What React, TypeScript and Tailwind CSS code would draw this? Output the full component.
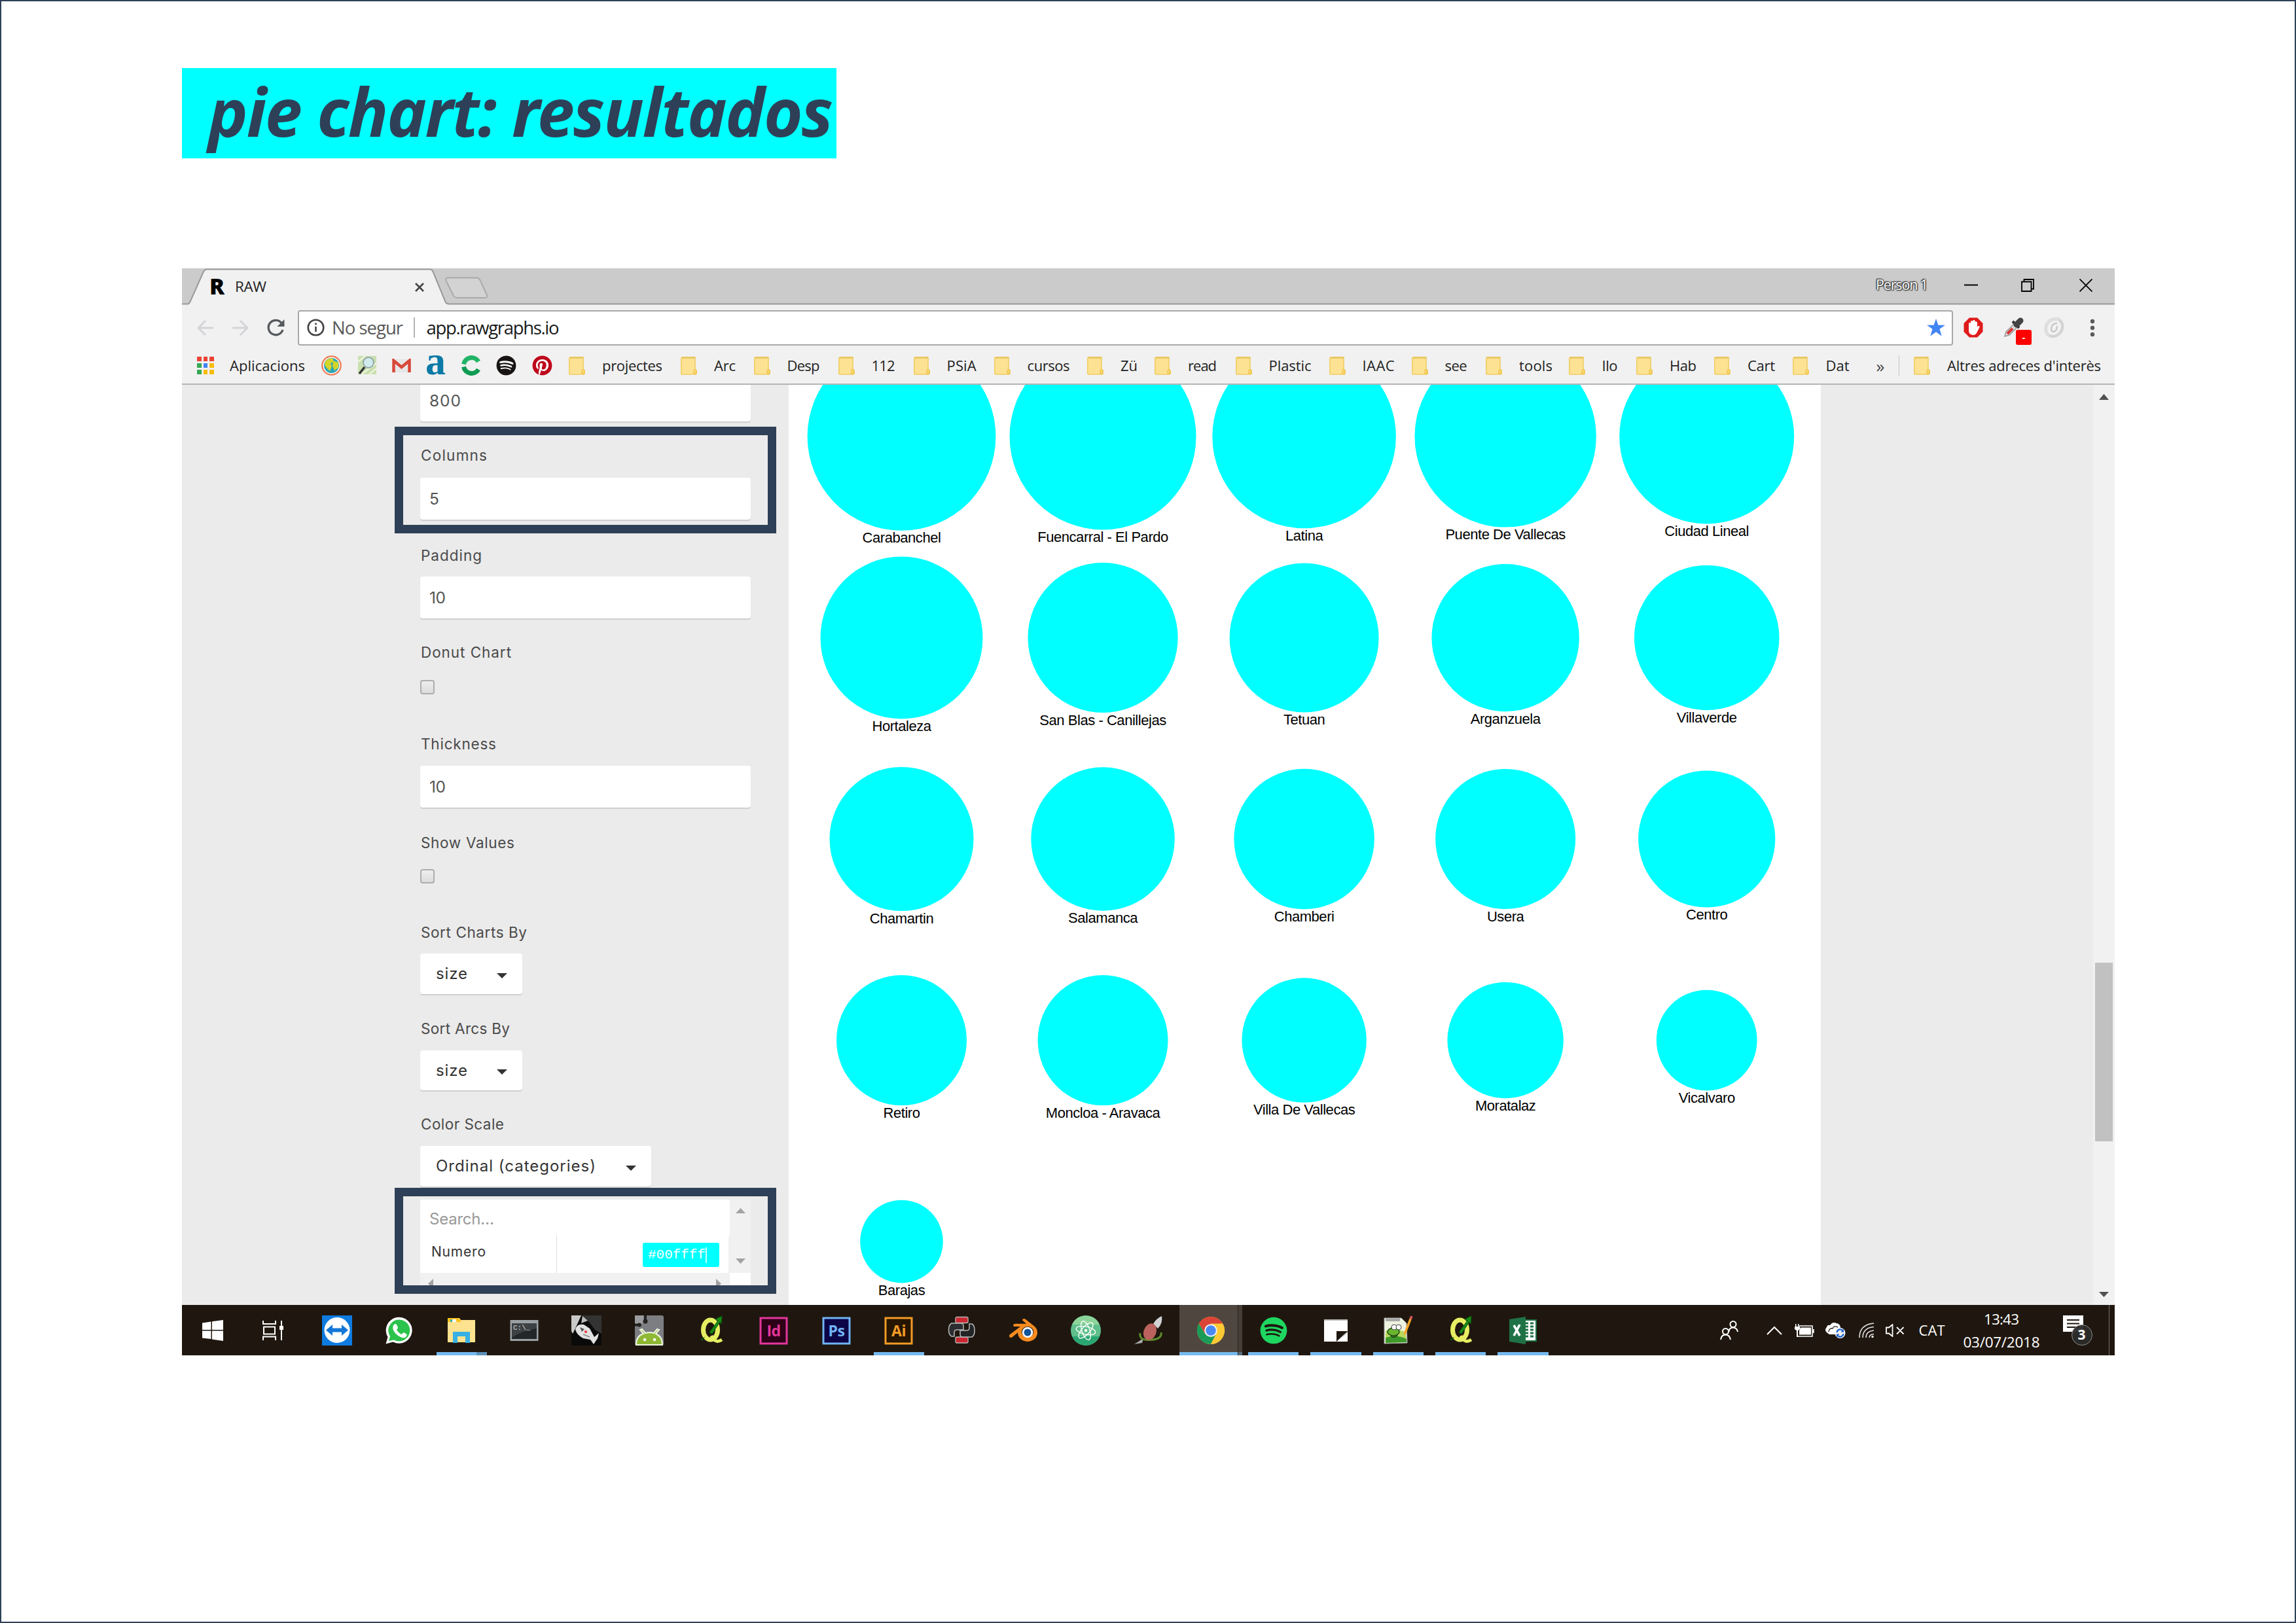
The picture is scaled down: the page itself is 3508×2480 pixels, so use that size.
import { useLayoutEffect, useRef, type ReactNode } from "react";
import { FaPinterest, FaSpotify } from "react-icons/fa";
import { SiBlender } from "react-icons/si";

const UI = "font-['Open_Sans','Noto_Sans',sans-serif]";
const FORM = "font-['Inter',sans-serif]";

/* A line of text whose letters are spaced to fill a given width. */
function Fit({ children, w, className = "" }: { children: string; w: number; className?: string }) {
  const ref = useRef<HTMLSpanElement>(null);
  useLayoutEffect(() => {
    const el = ref.current;
    if (!el) return;
    el.style.letterSpacing = "0px";
    const natural = el.getBoundingClientRect().width;
    el.style.letterSpacing = `${(w - natural) / Math.max(1, children.length - 1)}px`;
  }, [children, w]);
  return (
    <span className={`block shrink-0 whitespace-nowrap ${className}`} style={{ width: w }}>
      <span ref={ref} className="inline-block">{children}</span>
    </span>
  );
}

/* ---------- browser chrome ---------- */

function TabStrip() {
  return (
    <div className="relative flex h-[55px] shrink-0 items-center bg-[#cbcbcb]">
      <svg className="absolute left-0 top-0" width="2953" height="56" viewBox="0 0 2953 56" fill="none">
        <path d="M10 56L34 4Q35 1.500 38 1.500H379Q382 1.500 383.500 5L404 52Q405 54.500 408 56Z" fill="#f1f1f1" />
        <path d="M0 54.500H9Q11.500 54 12.500 51L33 5Q35 1.500 38 1.500H379Q382 1.500 383.500 5L402.500 51Q404 54.500 408 54.500H2953" stroke="#999" strokeWidth="2" />
        <path d="M406 14.500H450Q454 14.500 455.500 18L466 41Q467 45 463 45H420Q416 45 414.500 41L403.500 19Q402.500 14.500 406 14.500Z" fill="#d3d3d3" stroke="#aaa" strokeWidth="2" />
      </svg>
      <span className="relative ml-[42px] w-[39px] font-['Noto_Sans',sans-serif] text-[34px] font-black leading-[57px] text-black">R</span>
      <Fit w={48} className={`relative text-[22.500px] leading-[58px] text-[#222] ${UI}`}>RAW</Fit>
      <svg className="relative ml-[227px] mt-[2px]" width="14" height="14" viewBox="0 0 14 14" stroke="#444" strokeWidth="2.600"><path d="M1 1L13 13M13 1L1 13" /></svg>
      <div className="relative ml-auto flex h-full items-center pr-[34px] pb-[4px]">
        <Fit w={80} className={`text-[21.500px] text-white [text-shadow:0_0_2px_#333,0_0_2px_#333,0_0_3px_#333,1px_1px_1px_#444,-1px_-1px_1px_#444] ${UI}`}>Person 1</Fit>
        <svg className="ml-[55px]" width="21" height="20" viewBox="0 0 21 20"><path d="M0 9.500H21" stroke="#000" strokeWidth="2" /></svg>
        <svg className="ml-[66px]" width="20" height="20" viewBox="0 0 20 20" fill="none" stroke="#000" strokeWidth="1.800"><path d="M1 4.500H15.500V19H1ZM4.500 4V1H19V15.500H16" /></svg>
        <svg className="ml-[69px]" width="20" height="20" viewBox="0 0 20 20" stroke="#000" strokeWidth="1.800"><path d="M.5.5L19.500 19.500M19.500.5L.5 19.500" /></svg>
      </div>
    </div>
  );
}

function Toolbar() {
  return (
    <div className="flex h-[66px] shrink-0 items-center bg-[#f1f1f1] pt-[5px] pl-[23px]">
      <svg width="25" height="26" viewBox="0 0 25 26" fill="none" stroke="#d3d4d8" strokeWidth="3"><path d="M25 13H2.500M13 2L2 13L13 24" /></svg>
      <svg className="ml-[29px]" width="25" height="26" viewBox="0 0 25 26" fill="none" stroke="#d3d4d8" strokeWidth="3"><path d="M0 13H22.500M12 2L23 13L12 24" /></svg>
      <svg className="ml-[28px]" width="27" height="27" viewBox="0 0 27 27" fill="none"><path d="M22.500 7A11.200 11.200 0 1 0 24 17" stroke="#55585c" strokeWidth="3.300" /><path d="M26.500 1V12H15.500Z" fill="#55585c" /></svg>
      <div className="ml-[20px] flex h-[54px] w-[2529px] items-center rounded-[4px] border-2 border-[#a8a8a8] bg-white pl-[12px]">
        <svg width="27" height="27" viewBox="0 0 27 27" fill="none" stroke="#444"><circle cx="13.500" cy="13.500" r="11.800" strokeWidth="2.600" /><path d="M13.500 12V20M13.500 6.500V9.300" strokeWidth="2.600" /></svg>
        <Fit w={109} className={`ml-[11px] text-[27.500px] text-[#5a5a5a] ${UI}`}>No segur</Fit>
        <span className="ml-[16px] h-[31px] w-[1.500px] bg-[#b5b5b5]" />
        <Fit w={203} className={`ml-[18px] text-[27.500px] text-[#1a1a1a] ${UI}`}>app.rawgraphs.io</Fit>
        <svg className="ml-auto mr-[10px]" width="28" height="27" viewBox="0 0 28 27" fill="#4285f4"><path d="M14 0L17.400 9.700H28L19.500 15.800L22.700 26.500L14 20.200L5.300 26.500L8.500 15.800L0 9.700H10.600Z" /></svg>
      </div>
      <svg className="ml-[16px]" width="30" height="31" viewBox="0 0 30 31"><path d="M9 .5H21L29.500 9V22L21 30.500H9L.5 22V9Z" fill="#e01b1b" /><path d="M8 16V9Q9.500 7 11 9V6Q12.500 4 14 6V5Q16 3 17.800 5V7Q19.500 5.500 21 7.500V15L22 13Q25 12.500 24.500 15L20 24Q18 27 14.500 27Q8 26 8 20Z" fill="#fff" /></svg>
      <div className="relative ml-[31px] h-[40px] w-[43px]">
        <svg className="absolute left-0 top-[3px]" width="32" height="32" viewBox="0 0 32 32" fill="none"><path d="M2 30L4 23L17 10L22 15L9 28Z" fill="#ddd" stroke="#999" strokeWidth="1.500" /><path d="M6 26L14 18" stroke="#d33" strokeWidth="4" /><path d="M14 7L24 17" stroke="#333" strokeWidth="4" /><path d="M20 12L26 6" stroke="#444" strokeWidth="9" strokeLinecap="round" /></svg>
        <span className="absolute left-[19px] top-[23px] flex h-[23px] w-[24px] items-center justify-center rounded-[3px] bg-[#f00] text-[14px] font-bold text-white">-</span>
      </div>
      <svg className="ml-[19px]" width="31" height="31" viewBox="0 0 31 31" fill="none"><path d="M24 3Q10 0 4 11Q0 22 8 28" stroke="#dedede" strokeWidth="5" /><path d="M8 28Q20 32 27 20Q31 9 23 4" stroke="#d2d2d2" strokeWidth="4" /><path d="M20 9Q12 9 11 17Q11 21 14 22Q20 21 20 13" stroke="#c2c2c2" strokeWidth="2" /></svg>
      <svg className="ml-[39px]" width="8" height="28" viewBox="0 0 8 28" fill="#5a5a5a"><circle cx="4" cy="4" r="3.200" /><circle cx="4" cy="14" r="3.200" /><circle cx="4" cy="24" r="3.200" /></svg>
    </div>
  );
}

function Folder() {
  return (
    <svg className="shrink-0" width="25" height="28" viewBox="0 0 25 28"><path d="M2 1H22V19L24 21V25.500Q24 27 22 27H2Q.8 27 .8 25V3Q.8 1 2 1Z" fill="#fde293" stroke="#f0cd63" strokeWidth="1.600" /><path d="M2 1.500H22" stroke="#e6c45c" strokeWidth="2.400" /><path d="M20 26V20.500Q22 17.500 24 20.500V26Z" fill="#fbd76c" stroke="#e9bf45" strokeWidth="1" /></svg>
  );
}

const BOOKMARKS: [string, number, number][] = [
  ["projectes", 92, 870], ["Arc", 33, 1041], ["Desp", 50, 1152.500], ["112", 36, 1281.500], ["PSiA", 45, 1396.500],
  ["cursos", 65, 1519.500], ["Zü", 26, 1662], ["read", 44, 1765], ["Plastic", 65, 1888.500], ["IAAC", 49, 2031.500],
  ["see", 34, 2157.500], ["tools", 51, 2271], ["Ilo", 24, 2397.500], ["Hab", 41, 2501], ["Cart", 42, 2620], ["Dat", 36, 2739.500],
];

function Bookmarks() {
  const cells = ["#ea4335", "#ea4335", "#ea4335", "#34a853", "#4285f4", "#fbbc05", "#34a853", "#fbbc05", "#fbbc05"];
  return (
    <div className="flex h-[57px] shrink-0 items-center border-b-2 border-[#b4b4b4] bg-[#f1f1f1] pl-[23px]">
      <div className="grid grid-cols-3 gap-[3px]">
        {cells.map((c, i) => <span key={i} className="size-[6.700px]" style={{ background: c }} />)}
      </div>
      <Fit w={115} className={`ml-[24px] text-[22px] text-[#222] ${UI}`}>Aplicacions</Fit>
      <svg className="ml-[25px]" width="31" height="31" viewBox="0 0 31 31"><circle cx="15.500" cy="15.500" r="14.200" fill="#fff" stroke="#ee7d55" strokeWidth="2.300" /><circle cx="15.500" cy="15.500" r="11.500" fill="#2da5b9" /><path d="M6 9Q12 3 18 5L18 10L14 12L16 17L13 24Q7 19 5 14ZM18 8L26 11L26 19L20 23L17 16Z" fill="#d3d52a" /></svg>
      <svg className="ml-[24px]" width="30" height="31" viewBox="0 0 30 31"><path d="M1 1H29V29H1Z" fill="#c8dfaf" /><path d="M1 10L12 1M6 29L29 12M18 29L29 20" stroke="#edf3d8" strokeWidth="2.500" /><path d="M11 18L3 28" stroke="#333" strokeWidth="3.500" /><circle cx="17" cy="11" r="8" fill="#cfe9ec" stroke="#93a8a8" strokeWidth="2" /></svg>
      <svg className="ml-[23px]" width="29" height="22" viewBox="0 0 29 22"><path d="M1 1H28V21H1Z" fill="#e6e6e6" /><path d="M2.500 21V3L14.500 13L26.500 3V21" fill="none" stroke="#d9473a" strokeWidth="4.500" /></svg>
      <span className="relative -top-[8px] ml-[22px] w-[34px] font-['Liberation_Serif',serif] text-[62px] font-bold leading-[50px] text-[#0c7aa6]">a</span>
      <svg className="ml-[21px] shrink-0" width="31" height="31" viewBox="0 0 31 31" fill="none"><path d="M26 9.500A12.200 12.200 0 0 0 3.500 13.500" stroke="#22b466" strokeWidth="7" /><path d="M3.500 17.500A12.200 12.200 0 0 0 26 21.500" stroke="#0e9c52" strokeWidth="7" /></svg>
      <FaSpotify className="ml-[22px] shrink-0 rounded-full bg-white" size={31} color="#191414" />
      <FaPinterest className="ml-[24px] shrink-0 rounded-full bg-white" size={31} color="#bd081c" />
      <div className="ml-[25px] flex items-center">
        {BOOKMARKS.map(([t, w, x], i) => {
          const next = i + 1 < BOOKMARKS.length ? BOOKMARKS[i + 1][2] : x + 128;
          return (
            <div key={t} className="flex shrink-0 items-center gap-[26px]" style={{ width: next - x }}>
              <Folder />
              <Fit w={w} className={`text-[22px] text-[#222] ${UI}`}>{t}</Fit>
            </div>
          );
        })}
      </div>
      <span className={`w-[15px] text-[26px] leading-[30px] text-[#444] ${UI}`}>»</span>
      <span className="ml-[19px] h-[31px] w-[1.500px] bg-[#c4c4c4]" />
      <div className="ml-[22px] flex items-center gap-[26px]">
        <Folder />
        <Fit w={235} className={`text-[22px] text-[#222] ${UI}`}>Altres adreces d'interès</Fit>
      </div>
    </div>
  );
}

/* ---------- options column ---------- */

function Label({ children, w, className }: { children: string; w: number; className: string }) {
  return (
    <div className={`flex shrink-0 items-end ${className}`}>
      <Fit w={w} className={`ml-px text-[22.500px] leading-[40px] text-[#4a4a4a] ${FORM}`}>{children}</Fit>
    </div>
  );
}

function Input({ children, w }: { children: string; w: number }) {
  return (
    <div className="flex h-[64px] w-[505px] shrink-0 items-center rounded-[4px] bg-white pl-[14px] shadow-[0_2px_1px_#cfcfcf]">
      <Fit w={w} className={`text-[24.500px] text-[#555] ${FORM}`}>{children}</Fit>
    </div>
  );
}

function Checkbox() {
  return <div className="h-[22px] w-[22px] shrink-0 rounded-[4px] border-2 border-[#adadad] bg-gradient-to-b from-[#eee] to-[#dcdcdc]" />;
}

function Select({ children, w, className }: { children: string; w: number; className: string }) {
  return (
    <div className={`flex shrink-0 items-center justify-between rounded-[4px] bg-white pl-[24px] pr-[23px] shadow-[0_2px_1px_#cfcfcf] ${className}`}>
      <Fit w={w} className={`text-[24px] text-[#333] ${FORM}`}>{children}</Fit>
      <svg className="mt-[5px]" width="16" height="8" viewBox="0 0 16 8" fill="#333"><path d="M0 0H16L8 8Z" /></svg>
    </div>
  );
}

function Options() {
  return (
    <div className="-mt-[8px] flex w-[927px] shrink-0 flex-col pl-[364px]">
      <Input w={48}>800</Input>
      <Label w={101} className="h-[86px] pb-[14px]">Columns</Label>
      <Input w={14}>5</Input>
      <Label w={93} className="h-[87px] pb-[12px]">Padding</Label>
      <Input w={25}>10</Input>
      <Label w={138} className="h-[94px] pb-[22px]">Donut Chart</Label>
      <Checkbox />
      <Label w={115} className="h-[109px] pb-[13px]">Thickness</Label>
      <Input w={25}>10</Input>
      <Label w={143} className="h-[94px] pb-[20px]">Show Values</Label>
      <Checkbox />
      <Label w={162} className="h-[107px] pb-[12px]">Sort Charts By</Label>
      <Select w={48} className="h-[62px] w-[156px]">size</Select>
      <Label w={136} className="h-[86px] pb-[13px]">Sort Arcs By</Label>
      <Select w={48} className="h-[61px] w-[156px]">size</Select>
      <Label w={127} className="h-[85px] pb-[13px]">Color Scale</Label>
      <Select w={244} className="h-[62px] w-[353px]">Ordinal (categories)</Select>
      <div className="mt-[20px] flex h-[132px] w-[505px] shrink-0 overflow-hidden bg-[#f1f1f1]">
        <div className="flex w-[473px] flex-col">
          <div className="flex h-[55px] shrink-0 items-center rounded-t-[4px] bg-white pl-[14px] pt-[4px]">
            <Fit w={99} className={`text-[24px] text-[#999] ${FORM}`}>Search…</Fit>
          </div>
          <div className="mr-[2px] flex h-[57px] shrink-0 bg-white">
            <div className="flex w-[209px] items-center border-r border-[#ddd] pl-[17px] pb-[7px]">
              <Fit w={83} className={`text-[21px] text-[#333] ${FORM}`}>Numero</Fit>
            </div>
            <div className="flex flex-1 justify-end pt-[11px] pr-[14px]">
              <div className="flex h-[37px] w-[117px] items-center rounded-[3px] bg-[#0ff] pl-[8px]">
                <Fit w={88} className="font-['Liberation_Mono',monospace] text-[21px] leading-[36px] text-white">#00ffff</Fit>
                <span className="h-[24px] w-[1.500px] bg-[#cff]" />
              </div>
            </div>
          </div>
          <div className="flex h-[30px] shrink-0 justify-between pt-[9px] pl-[12px] pr-[13px]">
            <svg width="8" height="15" viewBox="0 0 8 15" fill="#a3a3a3"><path d="M8 0V15L0 7.500Z" /></svg>
            <svg width="8" height="15" viewBox="0 0 8 15" fill="#a3a3a3"><path d="M0 0V15L8 7.500Z" /></svg>
          </div>
        </div>
        <div className="flex w-[32px] flex-col items-center">
          <svg className="mt-[13px] shrink-0" width="15" height="8" viewBox="0 0 15 8" fill="#a3a3a3"><path d="M0 8H15L7.500 0Z" /></svg>
          <svg className="mt-[69px] shrink-0" width="15" height="8" viewBox="0 0 15 8" fill="#a3a3a3"><path d="M0 0H15L7.500 8Z" /></svg>
          <div className="mt-[14px] h-[20px] w-full shrink-0 bg-white" />
        </div>
      </div>
    </div>
  );
}

/* ---------- chart ---------- */

const PIES: [string, number][] = [
  ["Carabanchel", 143.900], ["Fuencarral - El Pardo", 142.500], ["Latina", 140.300], ["Puente De Vallecas", 138.700], ["Ciudad Lineal", 133.500],
  ["Hortaleza", 124], ["San Blas - Canillejas", 114.600], ["Tetuan", 114], ["Arganzuela", 112.700], ["Villaverde", 110.800],
  ["Chamartin", 110], ["Salamanca", 109.700], ["Chamberi", 107.200], ["Usera", 107], ["Centro", 104.600],
  ["Retiro", 99.500], ["Moncloa - Aravaca", 99.500], ["Villa De Vallecas", 95.200], ["Moratalaz", 88.700], ["Vicalvaro", 76.900],
  ["Barajas", 63.300],
];

function Chart() {
  return (
    <svg className="block shrink-0 bg-white" width="1577" height="1406" viewBox="0 0 1577 1406">
      {PIES.map(([name, r], i) => {
        const cx = 172.500 + (i % 5) * 307.550;
        const cy = 78.900 + Math.floor(i / 5) * 307.550;
        return (
          <g key={name}>
            <circle cx={cx} cy={cy} r={r} fill="#00ffff" />
            <text x={cx} y={cy + r + 18.500} textAnchor="middle" className="fill-black font-['Liberation_Sans',Arial,sans-serif] text-[22px] tracking-[-0.450px]">{name}</text>
          </g>
        );
      })}
    </svg>
  );
}

/* ---------- taskbar ---------- */

const SIZE = { width: 46, height: 46, viewBox: "0 0 46 46", fill: "none" };

function Adobe({ t, fg, bg }: { t: string; fg: string; bg: string }) {
  return (
    <svg {...SIZE}>
      <rect x="3" y="4" width="40" height="39" fill={bg} stroke={fg} strokeWidth="3" />
      <text x="23" y="31.500" textAnchor="middle" fill={fg} className="font-['Open_Sans',sans-serif] text-[23px] font-bold tracking-[-0.500px]">{t}</text>
    </svg>
  );
}

function Qgis() {
  return (
    <svg {...SIZE}>
      <ellipse cx="21.500" cy="22" rx="11" ry="15" stroke="#e6ee62" strokeWidth="7" />
      <path d="M23 31Q29 44 39 37" stroke="#e6ee62" strokeWidth="5" />
      <path d="M20 26L33 8L29 6L39 1L38 13L36 10L24 28Z" fill="#168a16" stroke="#0a5d0a" />
      <path d="M6 36L13 33L9 39Z" fill="#0c4f16" />
    </svg>
  );
}

const APPS: { icon: ReactNode; bar?: boolean; active?: boolean; stacked?: boolean }[] = [
  { icon: <svg {...SIZE}><rect width="46" height="46" fill="#0e7be0" /><circle cx="23" cy="22.500" r="19.500" fill="#fff" /><path d="M6 22.500L16 14V19.500H30V14L40 22.500L30 31V25.500H16V31Z" fill="#1477d8" /></svg> },
  { icon: <svg {...SIZE}><path d="M2.500 43.500L5.500 33A20 20 0 1 1 13.500 40.500Z" fill="#fff" /><path d="M7 39L9 32A16.500 16.500 0 1 1 15 37.500Z" fill="#2cc34c" /><path d="M15 14Q17 12 19 14L21 18.500Q21 20 19 22Q22 27 26.500 29L29 26.500Q30 26 31 26.500L34.500 29Q35 31 33 33Q30 35.500 25 33Q16 29 13.500 21Q12.500 16.500 15 14Z" fill="#fff" /></svg> },
  { bar: true, stacked: true, icon: <svg {...SIZE}><path d="M2 4H20L22 7H44V41H2Z" fill="#fde28f" /><path d="M2 4H19L22 8V10H2Z" fill="#fcc21b" /><rect x="6" y="6" width="9" height="4" fill="#fff" /><rect x="6" y="6" width="3" height="4" fill="#35b0a0" /><path d="M10 42V25H36V42H29V32H17V42Z" fill="#37b0e4" /></svg> },
  { icon: <svg {...SIZE}><rect x="1.500" y="7" width="43" height="32" fill="#9aa0a4" /><rect x="4" y="12" width="38" height="24" fill="#24272a" /><path d="M4 12H42V20Q22 22 4 34Z" fill="#3d4144" /><text x="6" y="22" fill="#d4d4d4" className="font-['Liberation_Mono',monospace] text-[11px]">C:\_</text></svg> },
  { icon: <svg {...SIZE}><rect width="46" height="46" fill="#0a0a0a" /><path d="M14 0H46V28L36 22L27 10Z" fill="#333" /><path d="M0 0H15L11 9L5 22L2 28L0 24Z" fill="#c9c9c9" /><path d="M6 21Q9 12 19 14L28 20L35 33L42 27L40 35L34 44L29 37L18 35Q8 30 6 21Z" fill="#e2e2e2" /><path d="M17 1L25 8L15 12Z" fill="#bbb" /><path d="M13 18L20 21L16 25Z" fill="#555" /><path d="M18 29L28 33" stroke="#888" strokeWidth="1.500" /><circle cx="22" cy="25" r="2" fill="#e33" /></svg> },
  { icon: <svg {...SIZE}><rect x="1" y="0" width="44" height="46" rx="3" fill="#7d7e82" /><path d="M1 0H14V10L10 15H1Z" fill="#9b9c9f" /><path d="M17 0V9M1 14.500H8" stroke="#24211f" strokeWidth="4" /><circle cx="17" cy="9" r="3.500" fill="#24211f" /><circle cx="8" cy="14.500" r="3" fill="#24211f" /><path d="M3 45Q3 31 14 28L9 22L12 21L17 27Q24 25 30 27L35 21L38 22L33 28Q43 32 43 45Z" fill="#8fb935" stroke="#f1f5e4" strokeWidth="2" /><circle cx="16" cy="37" r="2.200" fill="#fff" /><circle cx="31" cy="37" r="2.200" fill="#fff" /></svg> },
  { icon: <Qgis /> },
  { icon: <Adobe t="Id" fg="#e3369a" bg="#2d0018" /> },
  { icon: <Adobe t="Ps" fg="#71b4f5" bg="#0b0548" /> },
  { bar: true, icon: <Adobe t="Ai" fg="#f29b26" bg="#261500" /> },
  { icon: <svg {...SIZE}><rect x="14" y="2.500" width="19" height="9" rx="2" fill="#cc2630" stroke="#b9b9b9" strokeWidth="1.300" /><rect x="14" y="33" width="19" height="9" rx="2" fill="#cc2630" stroke="#b9b9b9" strokeWidth="1.300" /><path d="M8 12H22Q26 12 26 16V22H16Q12 22 12 26V32H8Q3.500 30 3.500 22Q3.500 14 8 12Z" fill="#2b2d30" stroke="#b9b9b9" strokeWidth="1.500" /><path d="M39 33H25Q21 33 21 29V23H31Q35 23 35 19V13H39Q43 15 43 23Q43 31 39 33Z" fill="#222426" stroke="#b9b9b9" strokeWidth="1.500" /></svg> },
  { icon: <div className="relative flex size-[46px] items-center justify-center"><SiBlender size={43} color="#f68b1f" /><svg className="absolute left-0 top-0" {...SIZE}><circle cx="29" cy="26" r="8.300" fill="#fff" /><circle cx="29" cy="26" r="5.500" fill="#14549a" /></svg></div> },
  { icon: <svg {...SIZE}><circle cx="23" cy="23" r="23" fill="#5fbf8b" /><path d="M2 32A23 23 0 0 0 44 32Z" fill="#2ba673" /><path d="M2 14A23 23 0 0 1 44 14Z" fill="#8dd49a" /><g stroke="#fff" strokeWidth="1.400"><ellipse cx="23" cy="23" rx="15" ry="6" transform="rotate(12 23 23)" /><ellipse cx="23" cy="23" rx="15" ry="6" transform="rotate(72 23 23)" /><ellipse cx="23" cy="23" rx="15" ry="6" transform="rotate(132 23 23)" /></g><circle cx="23" cy="23" r="2.200" fill="#fff" /></svg> },
  { icon: <svg {...SIZE}><path d="M43 1Q45 12 37 20L30 13Q34 5 43 1Z" fill="#d2d2d4" /><path d="M1 44L15 35L13 42Z" fill="#a9a9ac" /><path d="M10 27Q8 38 24 37.500Q44 37 42 26" stroke="#5e8c2c" strokeWidth="3" /><ellipse cx="25" cy="25" rx="9.500" ry="13" transform="rotate(20 25 25)" fill="#bb625e" /></svg> },
  { bar: true, active: true, icon: <svg {...SIZE}><circle cx="23" cy="23" r="21" fill="#fcc934" /><path d="M4.800 12.500A21 21 0 0 1 41.200 12.500L23 14L14 28Z" fill="#db4437" /><path d="M4.800 12.500A21 21 0 0 0 23 44L32 28L23 31L14 28Z" fill="#1a9c58" /><path d="M41.200 12.500H23V14A9.500 9.500 0 0 1 31 28L23 44A21 21 0 0 0 41.200 12.500Z" fill="#fcc934" /><circle cx="23" cy="23" r="9.800" fill="#f1f1f1" /><circle cx="23" cy="23" r="7.800" fill="#4a89f3" /></svg> },
  { bar: true, icon: <span className="rounded-full bg-[#1e170f]"><FaSpotify size={42} color="#1ed760" /></span> },
  { bar: true, icon: <svg {...SIZE}><path d="M5 6H41V24L27 40H5Z" fill="#fff" /><path d="M5 6H41V8H5Z" fill="#bbb" /><path d="M24 24H41L24 40Z" fill="#1e170f" /><path d="M41 25V40H26Z" fill="#fff" /></svg> },
  { bar: true, icon: <svg {...SIZE}><path d="M2 4H28L36 12L37 42L2 43Z" fill="#eef3e0" stroke="#a5a5a5" /><path d="M4 24Q20 18 35 26L36 41L4 42Z" fill="#b9d95e" /><path d="M4 34Q20 28 36 36V41L4 42Z" fill="#3f9a2a" /><path d="M4 4.500H26V9H4Z" fill="#aaa" /><ellipse cx="16" cy="25" rx="9" ry="6" fill="#69b52e" stroke="#234d16" strokeWidth="1.500" /><circle cx="17" cy="18" r="4" fill="#fff" stroke="#444" /><circle cx="24" cy="18" r="4" fill="#fff" stroke="#444" /><path d="M12 31Q17 36 22 30" stroke="#234d16" strokeWidth="2" /><path d="M43 3L33 29" stroke="#f2a52a" strokeWidth="3.500" /><path d="M44 1L42 6" stroke="#c8525a" strokeWidth="3.500" /></svg> },
  { bar: true, icon: <Qgis /> },
  { bar: true, icon: <svg {...SIZE}><rect x="24" y="7" width="19" height="32" fill="#fff" stroke="#1f7246" strokeWidth="2" /><path d="M26 12H31M26 17H31M26 22H31M26 27H31M26 32H31M34 12H39M34 17H39M34 22H39M34 27H39M34 32H39" stroke="#1f7246" strokeWidth="3" /><path d="M2 6L27 2V44L2 40Z" fill="#1f7246" /><path d="M9 15L18 31M18 14L9 31" stroke="#fff" strokeWidth="3.600" /></svg> },
];

function Taskbar() {
  return (
    <div className="flex h-[77px] shrink-0 bg-[#1f170f]">
      <div className="flex w-[93px] items-center justify-center">
        <svg width="32" height="32" viewBox="0 0 32 32" fill="#fff"><path d="M0 4.500L13.500 2.500V15H0ZM15 2.300L32 0V15H15ZM0 16.500H13.500V29L0 27.500ZM15 16.500H32V32L15 29.500Z" /></svg>
      </div>
      <div className="flex w-[96px] items-center pl-[30px]">
        <svg width="32" height="30" viewBox="0 0 32 30" fill="none" stroke="#fff" strokeWidth="2"><path d="M1 0V5H20V0M1 30V24.500H20V30M2 9.500H19V20.500H2ZM29 0V30" /><rect x="27" y="9" width="4" height="4" fill="#fff" /></svg>
      </div>
      {APPS.map((a, i) => (
        <div key={i} className={`relative flex w-[95.400px] shrink-0 items-center justify-center ${a.active ? "bg-[#4f463f]" : ""}`}>
          {a.icon}
          {a.bar && <span className={`absolute bottom-0 h-[5px] bg-[#76b9ed] ${a.active ? "inset-x-0" : "inset-x-[9px]"}`} />}
          {a.stacked && <span className="absolute bottom-0 right-[9px] h-[5px] w-[16px] bg-[#5b8fb8]" />}
          {a.active && <span className="absolute right-0 top-0 h-full w-[7px] border-l border-[#2b2520] bg-[#3f3731]/60" />}
        </div>
      ))}
      <div className="ml-auto flex items-center pr-[8px]">
        <svg width="28" height="30" viewBox="0 0 28 30" fill="none" stroke="#fff" strokeWidth="2"><circle cx="20" cy="5.500" r="4.500" /><path d="M13.500 17Q14 10.500 20 10.500Q26 11 27 17" /><circle cx="8.500" cy="16.500" r="4.500" /><path d="M1 29Q2 21.500 8.500 21.500Q15 22 16 29" /></svg>
        <svg className="ml-[43px]" width="24" height="14" viewBox="0 0 24 14" fill="none" stroke="#fff" strokeWidth="2"><path d="M1 13L12 2L23 13" /></svg>
        <svg className="ml-[19px]" width="30" height="20" viewBox="0 0 30 20" fill="none"><path d="M7 3H27V19H5" stroke="#fff" strokeWidth="1.600" /><path d="M9 5.500H25V16.500H7V10Z" fill="#fff" /><path d="M28.700 8V14" stroke="#fff" strokeWidth="2" /><path d="M0 4H8V8L4 11L0 8ZM1 0H2.500V4H1ZM5 0H6.500V4H5ZM3 10H5V20H3Z" fill="#fff" /></svg>
        <svg className="ml-[16px]" width="32" height="26" viewBox="0 0 32 26" fill="none"><path d="M3 16Q-1 12 3 8Q4 4 8 5Q12-1 18 2Q24 3 24 9Q29 11 26 17L17 19H7Z" fill="#fff" /><path d="M6 15Q7 9 12 10Q14 5 20 8" stroke="#3a332c" strokeWidth="1.500" /><circle cx="23.500" cy="17" r="8" fill="#f3f3f3" /><path d="M18.500 16A5 5 0 0 1 27.500 13.500M28.500 18A5 5 0 0 1 19.500 20.500" stroke="#1b63cf" strokeWidth="2.200" /><path d="M29 10.500V15.500H24.500ZM18 23.500V18.500H22.500Z" fill="#1b63cf" /></svg>
        <svg className="ml-[20px]" width="24" height="24" viewBox="0 0 24 24" fill="none" stroke="#ddd" strokeWidth="1.600"><path d="M1 23Q1 3 23 1M6 23Q6 8 23 6.500M11 23Q11 13 23 12M16 23Q16 18 23 17.500" /><circle cx="21" cy="21.500" r="1.700" fill="#fff" stroke="none" /></svg>
        <svg className="ml-[17px]" width="29" height="20" viewBox="0 0 29 20" fill="none" stroke="#fff" strokeWidth="1.800"><path d="M1 5.500H5L10.500 1V19L5 14.500H1ZM17 5L27.500 15.500M27.500 5L17 15.500" /></svg>
        <Fit w={40} className={`ml-[22px] text-[22px] text-white ${UI}`}>CAT</Fit>
        <div className="ml-[28px] flex flex-col items-center">
          <Fit w={54} className={`text-[22.500px] leading-[35px] text-white ${UI}`}>13:43</Fit>
          <Fit w={117} className={`text-[22.500px] leading-[35px] text-white ${UI}`}>03/07/2018</Fit>
        </div>
        <div className="relative ml-[35px] h-[46px] w-[46px]">
          <svg width="31" height="30" viewBox="0 0 31 30"><path d="M0 0H31V25H19L14 30V25H0Z" fill="#fff" /><path d="M6 7H25M6 12.500H25M6 18H25" stroke="#1f170f" strokeWidth="2" /></svg>
          <span className={`absolute left-[13px] top-[14px] flex size-[32px] items-center justify-center rounded-full border-[1.500px] border-[#8b8b8b] bg-[#2b2b2b]/95 text-[21px] font-bold text-white ${UI}`}>3</span>
        </div>
        <span className="ml-[24px] h-[77px] w-[1.500px] bg-[#77716b]" />
      </div>
    </div>
  );
}

export default function App() {
  return (
    <div className="flex h-[2480px] w-[3508px] flex-col overflow-hidden border-2 border-[#2e4057] bg-white pl-[276px]">
      <h1 className="mt-[102px] flex h-[138px] w-[1000px] items-center bg-[#0ff] pb-[7px] pl-[40px] font-['Noto_Sans',sans-serif] text-[102px] font-bold italic leading-[120px] text-[#2e4057]">
        <Fit w={955}>pie chart: resultados</Fit>
      </h1>
      <div className="relative mt-[168px] flex h-[1661px] w-[2953px] shrink-0 flex-col overflow-hidden bg-[#ebebeb]">
        <TabStrip />
        <Toolbar />
        <Bookmarks />
        <div className="flex h-[1406px] shrink-0 overflow-hidden">
          <Options />
          <Chart />
          <div className="ml-auto flex w-[33px] flex-col items-center bg-[#f1f1f1] pt-[14px]">
            <svg className="shrink-0" width="15" height="9" viewBox="0 0 15 9" fill="#505050"><path d="M0 9H15L7.500 0Z" /></svg>
            <div className="mt-[860px] h-[273px] w-[27px] shrink-0 bg-[#c1c1c1]" />
            <svg className="mt-[230px] shrink-0" width="15" height="8" viewBox="0 0 15 8" fill="#505050"><path d="M0 0H15L7.500 8Z" /></svg>
          </div>
        </div>
        <Taskbar />
        <div className="absolute left-[325px] top-[242px] h-[163px] w-[583px] border-[13px] border-[#2e4057]" />
        <div className="absolute left-[325px] top-[1405px] h-[162px] w-[583px] border-[13px] border-[#2e4057]" />
      </div>
    </div>
  );
}
